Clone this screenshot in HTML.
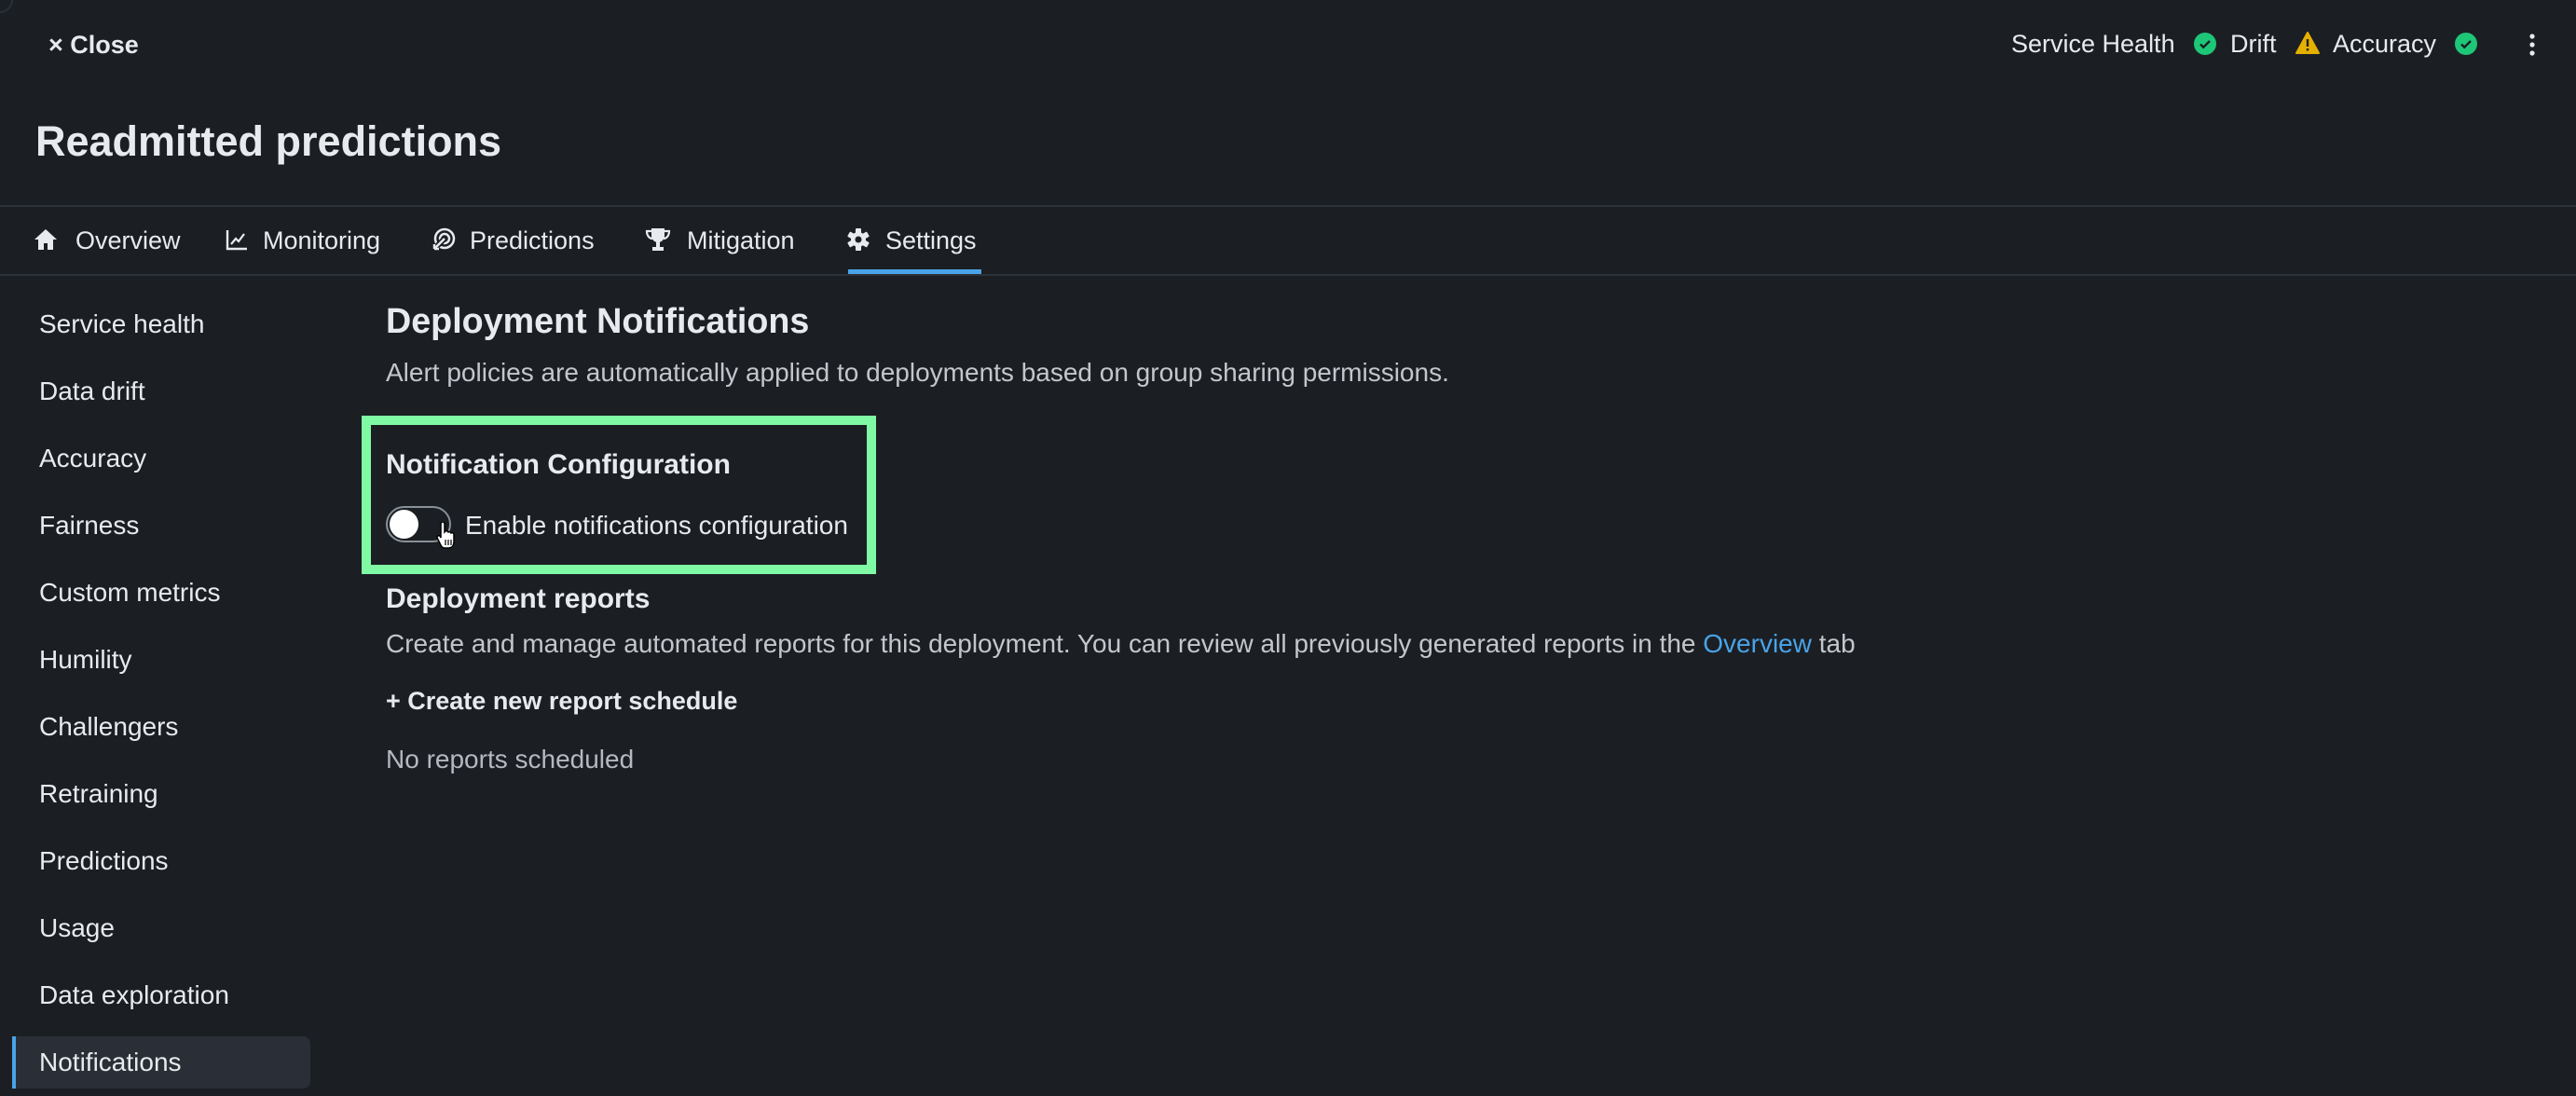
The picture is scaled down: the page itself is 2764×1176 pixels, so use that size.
<!DOCTYPE html>
<html><head><meta charset="utf-8"><style>
*{margin:0;padding:0;box-sizing:border-box}
body{width:2764px;height:1176px;background:#1b1f23;font-family:"Liberation Sans",sans-serif;color:#e8eaed;position:relative;overflow:hidden}
.a{position:absolute;white-space:nowrap;line-height:1}
.t{font-size:27px}
.side{font-size:28px;left:42px}
.sub{color:#c3c7cc;font-size:28px}
.ic{position:absolute}
</style></head><body>
<div style="position:absolute;left:-14px;top:-14px;width:28px;height:28px;border-radius:50%;border:2px solid #2a2f36"></div>
<div class="a" style="left:52px;top:35px;font-size:27px;font-weight:bold">× Close</div>
<div class="a" style="left:2158px;top:34px;font-size:27px">Service Health</div>
<svg class="ic" style="left:2354px;top:35px" width="24" height="24" viewBox="0 0 24 24"><circle cx="12" cy="12" r="12" fill="#1ec677"/><path d="M7 12.5l3.2 3.2L17 9" stroke="#1b1f23" stroke-width="2.4" fill="none"/></svg>
<div class="a" style="left:2393px;top:34px;font-size:27px">Drift</div>
<svg class="ic" style="left:2463px;top:34px" width="26" height="24" viewBox="0 0 26 24"><path d="M13 1L25 23H1Z" fill="#e5b000" stroke="#e5b000" stroke-linejoin="round" stroke-width="2"/><rect x="11.8" y="8" width="2.4" height="8" fill="#1b1f23"/><rect x="11.8" y="18" width="2.4" height="2.4" fill="#1b1f23"/></svg>
<div class="a" style="left:2503px;top:34px;font-size:27px">Accuracy</div>
<svg class="ic" style="left:2634px;top:35px" width="24" height="24" viewBox="0 0 24 24"><circle cx="12" cy="12" r="12" fill="#1ec677"/><path d="M7 12.5l3.2 3.2L17 9" stroke="#1b1f23" stroke-width="2.4" fill="none"/></svg>
<svg class="ic" style="left:2712px;top:36px" width="10" height="24" viewBox="0 0 10 24"><circle cx="5" cy="3" r="2.6" fill="#e8eaed"/><circle cx="5" cy="12" r="2.6" fill="#e8eaed"/><circle cx="5" cy="21" r="2.6" fill="#e8eaed"/></svg>

<div class="a" style="left:38px;top:129px;font-size:45px;font-weight:600">Readmitted predictions</div>
<div style="position:absolute;left:0;top:220px;width:2764px;height:2px;background:#2c3239"></div>
<div style="position:absolute;left:0;top:294px;width:2764px;height:2px;background:#2c3239"></div>
<div style="position:absolute;left:910px;top:289px;width:143px;height:5px;background:#4aa3e8"></div>

<svg class="ic" style="left:36px;top:245px" width="26" height="24" viewBox="0 0 26 24"><path d="M13 1L1 12h4v11h6v-7h4v7h6V12h4Z" fill="#e8eaed"/></svg>
<div class="a t" style="left:81px;top:245px">Overview</div>
<svg class="ic" style="left:242px;top:245px" width="24" height="24" viewBox="0 0 24 24"><path d="M2 2v20h21" stroke="#e8eaed" stroke-width="2.4" fill="none"/><path d="M6 17l5-6 3 3 6-8" stroke="#e8eaed" stroke-width="2.2" fill="none"/></svg>
<div class="a t" style="left:282px;top:245px">Monitoring</div>
<svg class="ic" style="left:463px;top:244px" width="26" height="26" viewBox="0 0 26 26"><circle cx="14" cy="12" r="10" stroke="#e8eaed" stroke-width="2.5" fill="none"/><circle cx="14" cy="12" r="5" stroke="#e8eaed" stroke-width="2.5" fill="none"/><path d="M14 12L2 24" stroke="#1b1f23" stroke-width="6"/><path d="M14 12L3 23M3 23h5M3 23v-5" stroke="#e8eaed" stroke-width="2.5" fill="none"/></svg>
<div class="a t" style="left:504px;top:245px">Predictions</div>
<svg class="ic" style="left:692px;top:244px" width="28" height="26" viewBox="0 0 28 26"><path d="M7 1h14v8a7 7 0 0 1-14 0Z" fill="#e8eaed"/><path d="M7 4H2c0 5 3 8 6 8M21 4h5c0 5-3 8-6 8" stroke="#e8eaed" stroke-width="2.2" fill="none"/><rect x="12" y="15" width="4" height="6" fill="#e8eaed"/><rect x="8" y="21" width="12" height="4" fill="#e8eaed"/></svg>
<div class="a t" style="left:737px;top:245px">Mitigation</div>
<svg class="ic" style="left:908px;top:244px" width="26" height="26" viewBox="0 0 26 26"><g fill="#e8eaed"><circle cx="13" cy="13" r="8"/><rect x="10" y="1" width="6" height="24" rx="1"/><rect x="10" y="1" width="6" height="24" rx="1" transform="rotate(60 13 13)"/><rect x="10" y="1" width="6" height="24" rx="1" transform="rotate(120 13 13)"/></g><circle cx="13" cy="13" r="3.5" fill="#1b1f23"/></svg>
<div class="a t" style="left:950px;top:245px">Settings</div>

<div class="a side" style="top:334px">Service health</div>
<div class="a side" style="top:406px">Data drift</div>
<div class="a side" style="top:478px">Accuracy</div>
<div class="a side" style="top:550px">Fairness</div>
<div class="a side" style="top:622px">Custom metrics</div>
<div class="a side" style="top:694px">Humility</div>
<div class="a side" style="top:766px">Challengers</div>
<div class="a side" style="top:838px">Retraining</div>
<div class="a side" style="top:910px">Predictions</div>
<div class="a side" style="top:982px">Usage</div>
<div class="a side" style="top:1054px">Data exploration</div>
<div style="position:absolute;left:13px;top:1112px;width:320px;height:56px;background:#2a2f37;border-radius:0 8px 8px 0;border-left:4px solid #4aa3e8"></div>
<div class="a side" style="top:1126px">Notifications</div>

<div class="a" style="left:414px;top:326px;font-size:37.7px;font-weight:bold">Deployment Notifications</div>
<div class="a sub" style="left:414px;top:386px">Alert policies are automatically applied to deployments based on group sharing permissions.</div>

<div style="position:absolute;left:388px;top:446px;width:552px;height:170px;border:10px solid #80f9a5"></div>
<div class="a" style="left:414px;top:484px;font-size:30px;font-weight:bold">Notification Configuration</div>
<div style="position:absolute;left:414px;top:543px;width:70px;height:39px;border:2px solid #8a9099;border-radius:20px"></div>
<div style="position:absolute;left:418px;top:547px;width:31px;height:31px;border-radius:50%;background:#fff"></div>
<svg class="ic" style="left:468px;top:560px" width="22" height="30" viewBox="0 0 22 30"><path d="M5 2a2 2 0 0 1 4 0v9l1-1a2 2 0 0 1 3 1 2 2 0 0 1 3 1 2 2 0 0 1 3 1v8c0 4-2 7-6 7H9c-2 0-3-1-4-3L1 17a2 2 0 0 1 3-2l1 2Z" fill="#fff" stroke="#000" stroke-width="1.5"/><path d="M10 19v6M13 19v6M16 19v6" stroke="#000" stroke-width="1.2"/></svg>
<div class="a" style="left:499px;top:550px;font-size:28px">Enable notifications configuration</div>

<div class="a" style="left:414px;top:628px;font-size:30px;font-weight:bold">Deployment reports</div>
<div class="a sub" style="left:414px;top:677px">Create and manage automated reports for this deployment. You can review all previously generated reports in the <span style="color:#4aa3e8">Overview</span> tab</div>
<div class="a" style="left:414px;top:739px;font-size:27px;font-weight:bold">+ Create new report schedule</div>
<div class="a sub" style="left:414px;top:801px;color:#b5b9bf">No reports scheduled</div>
</body></html>
